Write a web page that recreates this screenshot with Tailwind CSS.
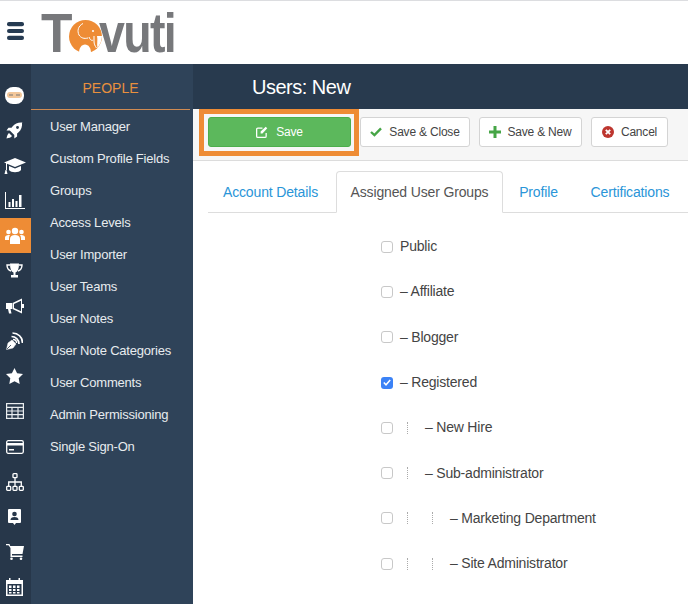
<!DOCTYPE html>
<html lang="en">
<head>
    <meta charset="UTF-8">
    <title>Users: New</title>
    <script src="https://cdn.jsdelivr.net/npm/@tailwindcss/browser@4"></script>
</head>
<body class="bg-white font-['Liberation_Sans',Arial,sans-serif] w-[688px] h-[604px] overflow-hidden">
    <!-- Top bar -->
    <header class="h-[64px] border-t border-[#dcdde0] border-b-[#b9bec4] flex items-center bg-white">
        <svg class="ml-[7px] -mt-[3px] w-[17px] h-[18px] shrink-0" viewBox="0 0 17 18" fill="#263b52">
            <rect x="0" y="0" width="17" height="4.200" rx="2"/><rect x="0" y="6.900" width="17" height="4.200" rx="2"/><rect x="0" y="13.800" width="17" height="4.200" rx="2"/>
        </svg>
        <div class="ml-[17px] flex items-center h-[44px] text-[#77787b] font-bold">
            <span class="w-[31px] text-[56px] leading-none origin-left scale-x-[0.92]">T</span>
            <svg class="w-[33px] h-[33px] ml-[-3px] mt-[7px] shrink-0" viewBox="0 0 33 33">
                <circle cx="16.500" cy="16.500" r="16.500" fill="#ee8c35"/>
                <path d="M10 33c0-5 2.500-8.500 6-8.500s6 3.500 6 8.500z" fill="#fff"/>
                <path d="M14 3.500C9 6 8 11 10 15c2 3 5 4 9 3" fill="none" stroke="#fff" stroke-width="1"/>
                <path d="M20 17c1 3 3 4 4 3M25 16v5c0 3 1 5 2.500 7" fill="none" stroke="#fff" stroke-width="1"/>
                <path d="M28 16c1 4-.5 8 .5 12l3-5c1-3 1.500-6 1.500-7z" fill="#fff"/>
                <circle cx="24" cy="11" r="1" fill="#fff"/>
            </svg>
            <span class="text-[56px] leading-none tracking-[-2px] ml-[-3px] mt-[1px] origin-left scale-x-[0.83]">vuti</span>
        </div>
    </header>

    <div class="flex h-[540px]">
        <!-- Icon rail -->
        <nav class="w-[31px] bg-[#27374a] flex flex-col shrink-0 text-white pt-[14px]">
            <div class="h-[35px] flex items-center justify-center pr-[2px]">
                <svg class="w-[19px] h-[17px]" viewBox="0 0 19 17"><rect width="19" height="17" rx="8" fill="#fff"/><rect x="2" y="5" width="15" height="6" rx="3" fill="#f3c79a"/><rect x="4" y="7.500" width="4" height="1" fill="#777"/><rect x="11" y="7.500" width="4" height="1" fill="#777"/></svg>
            </div>
            <div class="h-[35px] flex items-center justify-center pr-[2px]">
                <svg class="w-[17px] h-[17px]" viewBox="0 0 17 17" fill="#fff"><path d="M16.500.500c-4-.500-7.500 1-10 4l-1 1.200H2.500L.500 8.500h3.300l4.500 4.500v3.500l2.800-2v-3l1.200-1c3-2.500 4.200-6 3.700-10.500zM11.500 4a1.400 1.400 0 1 1 0 2.900 1.400 1.400 0 0 1 0-2.900zM3 11c-1.500 1-2 3-2.500 5.500C3 16 5 15.500 6 14z"/></svg>
            </div>
            <div class="h-[35px] flex items-center justify-center pr-[1px]">
                <svg class="w-[22px] h-[17px]" viewBox="0 0 22 17" fill="#fff"><path d="M11 1 22 5.500 11 10 3 6.800V13H2V6.300L0 5.500z"/><path d="M5 9v4c2 3 10 3 12 0V9l-6 2.400zM1.500 13l1 .1L3.500 17h-3z"/></svg>
            </div>
            <div class="h-[35px] flex items-center justify-center pr-[2px]">
                <svg class="w-[20px] h-[17px]" viewBox="0 0 20 17" fill="#fff"><path d="M0 0h1v16h19v1H0z"/><rect x="3.500" y="10" width="2" height="5"/><rect x="7" y="7" width="2" height="8"/><rect x="10.500" y="9" width="2" height="6"/><rect x="14" y="3" width="2.500" height="12"/></svg>
            </div>
            <div class="h-[36px] bg-[#ee8c35] flex items-center justify-center pr-[2px]">
                <svg class="w-[20px] h-[17px]" viewBox="0 0 20 17" fill="#fff"><circle cx="10" cy="4" r="3.200"/><circle cx="3.500" cy="5" r="2.300"/><circle cx="16.500" cy="5" r="2.300"/><path d="M5 17v-5c0-2.500 2-4 5-4s5 1.500 5 4v5z"/><path d="M0 13v-2.500C0 9 1.500 8 3.500 8c.6 0 1.200.1 1.600.3C4.400 9 4 10 4 12v1zM20 13v-2.500C20 9 18.500 8 16.500 8c-.6 0-1.200.1-1.600.3.700.7 1.100 1.700 1.100 3.700v1z"/></svg>
            </div>
            <div class="h-[35px] flex items-center justify-center pr-[2px]">
                <svg class="w-[17px] h-[15px]" viewBox="0 0 17 15"><path d="M4 .500h9c0 5-1 8-3.500 9V12H12v2.500H5V12h2.500V9.500C5 8.500 4 5.500 4 .500z" fill="#fff"/><path d="M4 2H1c0 3 1 5 4 6M13 2h3c0 3-1 5-4 6" fill="none" stroke="#fff" stroke-width="1.400"/></svg>
            </div>
            <div class="h-[35px] flex items-center justify-center pr-[2px]">
                <svg class="w-[18px] h-[16px]" viewBox="0 0 18 16" fill="#fff"><path d="M0 5h6v6H4.500l1 4.500h-2.500L2 11H0z"/><path d="M6.500 5 16 .500v15L6.500 11z"/><path d="M8 6 15 2.800v10.400L8 10z" fill="#27374a"/><rect x="16" y="6" width="2" height="4"/></svg>
            </div>
            <div class="h-[36px] flex items-center justify-center pr-[2px]">
                <svg class="w-[17px] h-[18px]" viewBox="0 0 17 18" fill="none" stroke="#fff"><path d="M.500 17.500 2 11l4-3 4 4-3 4z" fill="#fff" stroke-width=".5"/><path d="M.800 17.200 5 13" stroke="#27374a" stroke-width=".8"/><path d="M5.500 4.500c4 0 7.500 3 7.500 7.500M6.500 1c5.500 0 10 4 10 10" stroke-width="1.700"/><path d="M7 7.500c2 0 3.500 1.500 3.500 3.500" stroke-width="1.300"/></svg>
            </div>
            <div class="h-[35px] flex items-center justify-center pr-[2px]">
                <svg class="w-[17px] h-[16px]" viewBox="0 0 17 16" fill="#fff"><path d="M8.500 0l2.600 5.300 5.900.8-4.300 4.100 1 5.800-5.200-2.800L3.300 16l1-5.800L0 6.100l5.900-.8z"/></svg>
            </div>
            <div class="h-[35px] flex items-center justify-center pr-[2px]">
                <svg class="w-[18px] h-[16px]" viewBox="0 0 18 16" fill="none" stroke="#e8ecef" stroke-width="1.200"><rect x=".600" y=".600" width="16.800" height="14.800"/><path d="M0 4.400h18M0 8h18M0 11.700h18M6 4v12M12 4v12"/></svg>
            </div>
            <div class="h-[36px] flex items-center justify-center pr-[2px]">
                <svg class="w-[18px] h-[14px]" viewBox="0 0 18 14" fill="none" stroke="#fff"><rect x=".700" y=".700" width="16.600" height="12.600" rx="1.500" stroke-width="1.300"/><rect x="1" y="3" width="16" height="2.500" fill="#fff" stroke="none"/><rect x="3" y="9" width="5" height="1.500" fill="#fff" stroke="none"/></svg>
            </div>
            <div class="h-[35px] flex items-center justify-center pr-[2px]">
                <svg class="w-[18px] h-[18px]" viewBox="0 0 18 18" fill="none" stroke="#fff" stroke-width="1.300"><rect x="7" y=".700" width="4" height="4" rx=".8"/><rect x=".700" y="13.300" width="4" height="4" rx=".8"/><rect x="7" y="13.300" width="4" height="4" rx=".8"/><rect x="13.300" y="13.300" width="4" height="4" rx=".8"/><path d="M9 4.700v8.600M2.700 13.300V9h12.600v4.300"/></svg>
            </div>
            <div class="h-[35px] flex items-center justify-center pr-[2px]">
                <svg class="w-[13px] h-[16px]" viewBox="0 0 13 16"><path d="M1 0h11a1 1 0 0 1 1 1v12a1 1 0 0 1-1 1H8l-1.500 2L5 14H1a1 1 0 0 1-1-1V1a1 1 0 0 1 1-1z" fill="#fff"/><circle cx="6.500" cy="5" r="2.300" fill="#27374a"/><path d="M2.500 11c0-2 1.500-3 4-3s4 1 4 3z" fill="#27374a"/></svg>
            </div>
            <div class="h-[35px] flex items-center justify-center pr-[2px]">
                <svg class="w-[18px] h-[16px]" viewBox="0 0 18 16" fill="#fff"><path d="M0 0h3.500l.7 2H18l-1.500 8H6v1.500h10.500V13H4.500V4L2.500 1.300H0z"/><circle cx="5.500" cy="14.700" r="1.300"/><circle cx="15" cy="14.700" r="1.300"/></svg>
            </div>
            <div class="h-[35px] flex items-center justify-center pr-[2px]">
                <svg class="w-[17px] h-[18px]" viewBox="0 0 17 18"><path d="M0 2h3V0h1.500v2h8V0H14v2h3v16H0z" fill="#fff"/><path d="M1.500 6h14v10.500h-14z" fill="#27374a"/><path d="M3 7.500h2.500V10H3zM7 7.500h2.500V10H7zM11 7.500h2.500V10H11zM3 11h2.500v2H3zM7 11h2.500v2H7zM11 11h2.500v2H11zM3 14h2.500v1.500H3zM7 14h2.500v1.500H7zM11 14h2.500v1.500H11z" fill="#fff"/></svg>
            </div>
        </nav>

        <!-- Sidebar -->
        <aside class="w-[162px] bg-[#2f4359] shrink-0">
            <h2 class="h-[46px] mr-[3px] border-b border-[#d08b52] flex items-center justify-center text-[#e8903e] text-[14px] pt-[4px]">PEOPLE</h2>
            <ul class="text-[13px] tracking-[-0.2px] text-[#e8ecef] pt-[1px]">
                <li class="h-[32px] flex items-center pl-[19px]">User Manager</li>
                <li class="h-[32px] flex items-center pl-[19px]">Custom Profile Fields</li>
                <li class="h-[32px] flex items-center pl-[19px]">Groups</li>
                <li class="h-[32px] flex items-center pl-[19px]">Access Levels</li>
                <li class="h-[32px] flex items-center pl-[19px]">User Importer</li>
                <li class="h-[32px] flex items-center pl-[19px]">User Teams</li>
                <li class="h-[32px] flex items-center pl-[19px]">User Notes</li>
                <li class="h-[32px] flex items-center pl-[19px]">User Note Categories</li>
                <li class="h-[32px] flex items-center pl-[19px]">User Comments</li>
                <li class="h-[32px] flex items-center pl-[19px]">Admin Permissioning</li>
                <li class="h-[32px] flex items-center pl-[19px]">Single Sign-On</li>
            </ul>
        </aside>

        <!-- Main -->
        <main class="flex-1 min-w-0">
            <div class="h-[45px] bg-[#283a4e] flex items-center pl-[59px] text-white text-[20px] tracking-[-0.5px]">Users: New</div>

            <div class="relative h-[52px] bg-[#f6f6f6] border-b border-[#dcdcdc] flex items-start gap-[9px] pl-[15px] pt-[8px] text-[12px] tracking-[-0.2px] text-[#444]">
                <div class="absolute left-[6px] top-0 w-[160px] h-[47px] border-[5px] border-[#ee8c35]"></div>
                <button class="relative w-[143px] h-[30px] bg-[#5cb85c] border border-[#4cae4c] rounded-[3px] text-white flex items-center justify-center gap-[8px]">
                    <svg class="w-[12px] h-[12px]" viewBox="0 0 13 13" fill="none" stroke="#fff" stroke-width="1.400"><path d="M11 7.500V11a1.300 1.300 0 0 1-1.300 1.300H2A1.300 1.300 0 0 1 .700 11V3.500A1.300 1.300 0 0 1 2 2.200h5"/><path d="M5 6 10.500.800l1.700 1.700L7 8H5z" fill="#fff" stroke="none"/></svg>
                    Save
                </button>
                <button class="w-[110px] h-[30px] bg-white border border-[#d4d4d4] rounded-[3px] flex items-center justify-center gap-[7px]">
                    <svg class="w-[12px] h-[10px]" viewBox="0 0 13 11" fill="none" stroke="#46a546" stroke-width="2.600"><path d="M1 5.500 4.800 9 12 1.500"/></svg>
                    Save &amp; Close
                </button>
                <button class="w-[103px] h-[30px] bg-white border border-[#d4d4d4] rounded-[3px] flex items-center justify-center gap-[6px]">
                    <svg class="w-[12px] h-[12px]" viewBox="0 0 12 12" fill="#46a546"><path d="M4.500 0h3v4.500H12v3H7.500V12h-3V7.500H0v-3h4.500z"/></svg>
                    Save &amp; New
                </button>
                <button class="w-[77px] h-[30px] bg-white border border-[#d4d4d4] rounded-[3px] flex items-center justify-center gap-[7px]">
                    <svg class="w-[12px] h-[12px]" viewBox="0 0 12 12"><circle cx="6" cy="6" r="6" fill="#bd362f"/><path d="M3.800 3.800l4.400 4.400M8.200 3.800 3.800 8.200" stroke="#fff" stroke-width="1.800"/></svg>
                    Cancel
                </button>
            </div>

            <!-- Tabs -->
            <div class="flex h-[42px] ml-[15px] mt-[10px] border-b border-[#dddddd] text-[14px] tracking-[-0.15px] text-[#2a95d8]">
                <a class="h-[41px] w-[125px] shrink-0 flex items-center justify-center pt-[1px]">Account Details</a>
                <a class="h-[42px] w-[167px] ml-[3px] shrink-0 bg-white border border-[#dddddd] border-b-white rounded-t-[4px] text-[#555] flex items-center justify-center">Assigned User Groups</a>
                <a class="h-[41px] w-[71px] shrink-0 flex items-center justify-center pt-[1px]">Profile</a>
                <a class="h-[41px] w-[112px] shrink-0 flex items-center justify-center pt-[1px]">Certifications</a>
            </div>

            <!-- Group list -->
            <ul class="pl-[188px] pt-[11px] text-[14px] tracking-[-0.2px] text-[#444]">
                <li class="h-[45.300px] flex items-center">
                    <span class="w-[12px] h-[12px] rounded-[3px] border border-[#c8c8c8] bg-white mr-[7px] shrink-0"></span>Public
                </li>
                <li class="h-[45.300px] flex items-center">
                    <span class="w-[12px] h-[12px] rounded-[3px] border border-[#c8c8c8] bg-white mr-[7px] shrink-0"></span>– Affiliate
                </li>
                <li class="h-[45.300px] flex items-center">
                    <span class="w-[12px] h-[12px] rounded-[3px] border border-[#c8c8c8] bg-white mr-[7px] shrink-0"></span>– Blogger
                </li>
                <li class="h-[45.300px] flex items-center">
                    <span class="w-[12px] h-[12px] rounded-[3px] bg-[#3b82f6] mr-[7px] shrink-0 flex items-center justify-center">
                        <svg class="w-[8px] h-[7px]" viewBox="0 0 8 7" fill="none" stroke="#fff" stroke-width="1.500"><path d="M.800 3.500 3 5.800 7.200 1"/></svg>
                    </span>– Registered
                </li>
                <li class="h-[45.300px] flex items-center">
                    <span class="w-[12px] h-[12px] rounded-[3px] border border-[#c8c8c8] bg-white mr-[14px] shrink-0"></span>
                    <span class="w-0 h-[12px] border-l border-dotted border-[#aaa] mr-[17px]"></span>– New Hire
                </li>
                <li class="h-[45.300px] flex items-center">
                    <span class="w-[12px] h-[12px] rounded-[3px] border border-[#c8c8c8] bg-white mr-[14px] shrink-0"></span>
                    <span class="w-0 h-[12px] border-l border-dotted border-[#aaa] mr-[17px]"></span>– Sub-administrator
                </li>
                <li class="h-[45.300px] flex items-center">
                    <span class="w-[12px] h-[12px] rounded-[3px] border border-[#c8c8c8] bg-white mr-[14px] shrink-0"></span>
                    <span class="w-0 h-[12px] border-l border-dotted border-[#aaa] mr-[24px]"></span>
                    <span class="w-0 h-[12px] border-l border-dotted border-[#aaa] mr-[17px]"></span>– Marketing Department
                </li>
                <li class="h-[45.300px] flex items-center">
                    <span class="w-[12px] h-[12px] rounded-[3px] border border-[#c8c8c8] bg-white mr-[14px] shrink-0"></span>
                    <span class="w-0 h-[12px] border-l border-dotted border-[#aaa] mr-[24px]"></span>
                    <span class="w-0 h-[12px] border-l border-dotted border-[#aaa] mr-[17px]"></span>– Site Administrator
                </li>
            </ul>
        </main>
    </div>
</body>
</html>
